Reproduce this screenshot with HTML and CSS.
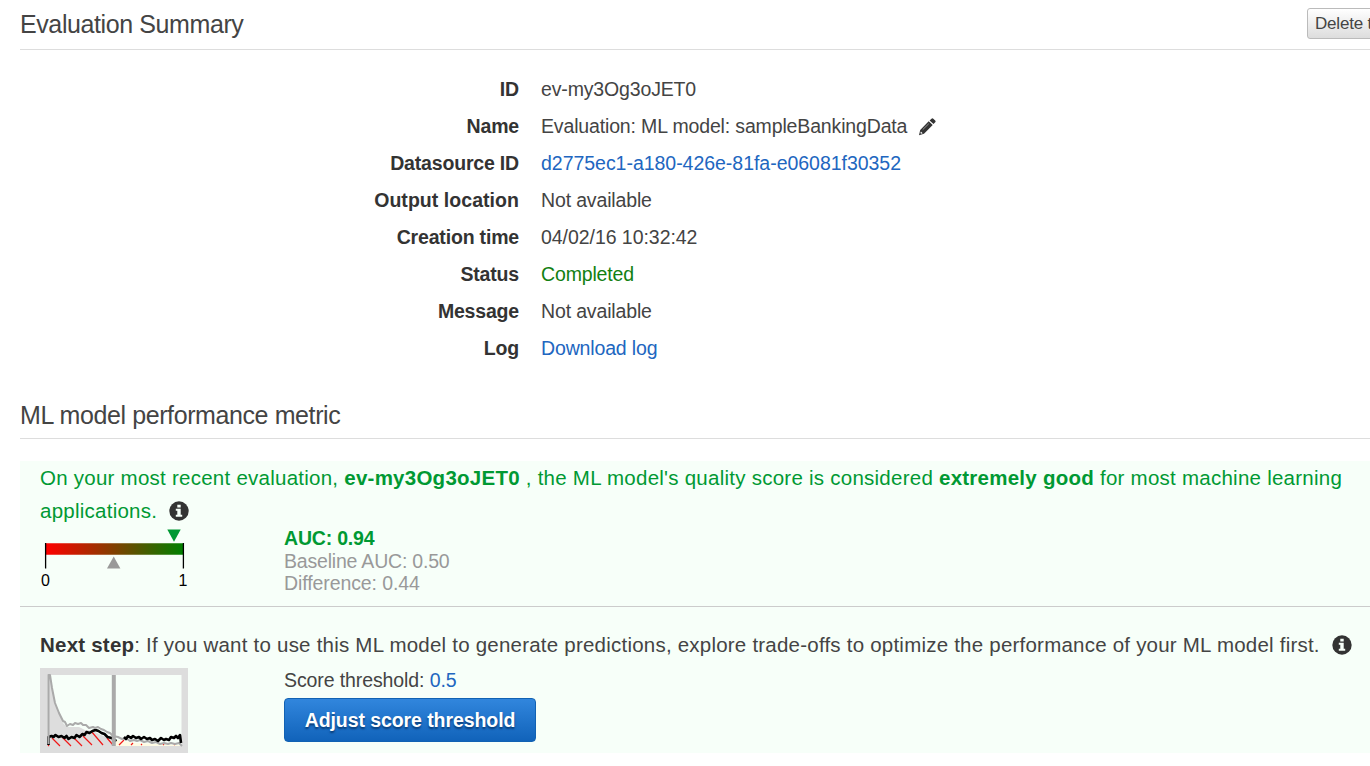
FILE: index.html
```html
<!DOCTYPE html>
<html lang="en">
<head>
<meta charset="utf-8">
<title>Evaluation Summary</title>
<link rel="stylesheet" href="styles.css">
</head>
<body>
<main class="page">
  <header class="section-head summary-head">
    <h1 class="title">Evaluation Summary</h1>
    <button class="delete-btn">Delete this evaluation</button>
  </header>
  <dl class="details">
    <dt>ID</dt><dd>ev-my3Og3oJET0</dd>
    <dt>Name</dt><dd>Evaluation: ML model: sampleBankingData
      <svg class="pencil" width="18" height="18" viewBox="0 0 18 18"><path fill="#333" d="M11.6 2.5 13.5.7q.9-.8 1.8 0l1.9 1.8q.8.9 0 1.8l-1.7 1.8zM10.7 3.3l4 3.7L6 15.7 1 17.2l1.2-5.3z"/><path fill="none" stroke="#aaa" stroke-width=".8" d="m4.7 11.7 6.1-6"/><path fill="#fff" d="m2.9 13.5 1.8 1.8-1.6.5-.7-.7z"/></svg></dd>
    <dt>Datasource ID</dt><dd><a class="link source">d2775ec1-a180-426e-81fa-e06081f30352</a></dd>
    <dt class="wide">Output location</dt><dd>Not available</dd>
    <dt>Creation time</dt><dd class="time">04/02/16 10:32:42</dd>
    <dt>Status</dt><dd class="done">Completed</dd>
    <dt>Message</dt><dd>Not available</dd>
    <dt>Log</dt><dd><a class="link">Download log</a></dd>
  </dl>
  <header class="section-head metric-head">
    <h2 class="title">ML model performance metric</h2>
  </header>
  <section class="panel">
    <div class="result">
      <p class="verdict">On your most recent evaluation, <b>ev-my3Og3oJET0</b> , the ML model's quality score is considered <b>extremely good</b> for most machine learning<br>applications.
        <svg class="info" width="20" height="20" viewBox="0 0 20 20"><circle cx="10" cy="10" r="9.7" fill="#333"/><path fill="#f7fff9" d="M8.3 3.7h3.4v2.7H8.3zM6.8 7.8h4.9v6h1.5v2H6.8v-2h1.5v-4H6.8z"/></svg></p>
      <div class="row">
        <svg class="gauge" width="160" height="64" viewBox="40 527 160 64">
          <defs><linearGradient id="score"><stop offset="0" stop-color="#f00"/><stop offset="1" stop-color="#008000"/></linearGradient></defs>
          <path fill="#093" d="M167.3 529.6h13.4L174 541.7z"/>
          <path fill="url(#score)" d="M46 543.3h137v11.5H46z"/>
          <path stroke="#000" stroke-width="1.3" d="M45.6 543v25.5M183.4 543v25.5"/>
          <path fill="#999" d="M107 568.6h13.4l-6.7-12.2z"/>
          <text x="45.5" y="585.6">0</text><text x="183" y="585.6">1</text>
        </svg>
        <div class="scores"><b>AUC: 0.94</b><span>Baseline AUC: 0.50</span><span class="diff">Difference: 0.44</span></div>
      </div>
    </div>
    <div class="next">
      <p class="advice"><b>Next step</b>: If you want to use this ML model to generate predictions, explore trade-offs to optimize the performance of your ML model first.
        <svg class="info" width="20" height="20" viewBox="0 0 20 20"><circle cx="10" cy="10" r="9.7" fill="#333"/><path fill="#f7fff9" d="M8.3 3.7h3.4v2.7H8.3zM6.8 7.8h4.9v6h1.5v2H6.8v-2h1.5v-4H6.8z"/></svg></p>
      <div class="row">
        <svg class="chart" width="148" height="85" viewBox="0 0 148 85">
          <path fill="#ddd" d="M0 0h148v85H0z"/>
          <path fill="#f7fff9" d="M7.5 7h134v71h-134z"/>
          <path fill="#ddd" d="M7.5 7H10l2 13 3 15 4 10 4 10 4 4h12l6 3 8 1 8 4 12 5v6H7.5z"/>
          <path fill="#fffbe3" d="M76 72l20 3 20 1 24 1v1H76z"/>
          <path stroke="#f01818" stroke-width="1.2" fill="none" d="M8 77l1 1M12 70l8 8M22 69l9 9M34 70l8 8M43 68l9 9M51 63l12 14M67 70l6 7M79 77l5-5M91 77l2-2M101 77l1-1M123 77l1-1M134 77l1-1"/>
          <path stroke="#000" stroke-width="2.6" fill="none" stroke-linejoin="round" d="M8.5 77v-8l3-1 2 1 2-2 3 2 3-1 3 2 2-2 2 3 3-2 3 1 2-3 3 2 3-3 2 1 2-3 3 1 3-2 3-1 3 1 3 2 3 1 3 3 4 1 5 3"/>
          <path stroke="#aaa" stroke-width="2" fill="none" stroke-linejoin="round" d="M8.5 76V7H10l2 13 3 15 4 10 4 8 2 1 2 4 3-2 3 1 2-2 3 1 3-1 2 2 3 0 3 3 4-1 2 1 3-1 3 2 3 1 3 2 3 1 3 3 5 1 4 2 4-1 4 3 4-1 3 1 3-1 4 2 4-1 4 2 4-1 4 2 4-1 4 1 3-1 4 1 4-1 3 3"/>
          <path stroke="#000" stroke-width="2.6" fill="none" stroke-linejoin="round" d="M84 69l2 2 2-3 3 2 2-2 3 2 3-1 2 2 3-2 3 2 3-1 2 2 3-1 3 2 3-3 3 2 2-1 3 1 2-3 3 1 2-2 2 2 2-3 1 8"/>
          <path stroke="#aaa" stroke-width="4" d="M73.8 7v71"/>
        </svg>
        <div class="threshold">
          <div class="score-line">Score threshold: <a class="link">0.5</a></div>
          <button class="primary">Adjust score threshold</button>
        </div>
      </div>
    </div>
  </section>
</main>
</body>
</html>
```
FILE: styles.css
```css
* { box-sizing: border-box; }
html, body { margin: 0; overflow: hidden; background: #fff; }
body { font-family: "Liberation Sans", Arial, sans-serif; font-size: 19.5px; color: #444; }
h1, h2, p, dl, dd { margin: 0; }
.page { height: 766px; padding-left: 20px; overflow: hidden; }
.section-head { display: flex; border-bottom: 1.5px solid #ddd; }
.summary-head { height: 50px; justify-content: space-between; }
.title { font-size: 25px; font-weight: 400; line-height: 30px; letter-spacing: -0.4px; padding-top: 9px; }
.delete-btn { flex: none; width: 180px; height: 31px; margin: 8px -117px 0 0; padding: 0 7px; text-align: left; white-space: nowrap; font: 17px "Liberation Sans", Arial, sans-serif; letter-spacing: -0.2px; color: #444; border: 1px solid #bbb; border-radius: 3px; background: linear-gradient(#fff, #ddd); }
.details { display: grid; grid-template-columns: 499px 1fr; column-gap: 22px; grid-auto-rows: 37px; padding-top: 21px; line-height: 36px; letter-spacing: -0.15px; white-space: nowrap; }
.details dt { text-align: right; font-weight: 700; color: #333; letter-spacing: -0.18px; }
.details .wide { letter-spacing: 0.05px; }
.details .time { letter-spacing: -0.05px; }
.link { color: #2166c0; }
.source { letter-spacing: -0.03px; }
.done { color: #128012; }
.pencil { margin-left: 5px; vertical-align: -3px; }
.metric-head { height: 72px; padding-top: 24px; }
.panel { height: 292px; margin-top: 22px; background: #f7fff9; }
.result { height: 146px; padding-left: 20px; border-bottom: 1.5px solid #ccc; }
.verdict { height: 66px; padding-top: 1px; font-size: 20.5px; line-height: 32.5px; color: #093; white-space: nowrap; letter-spacing: 0.25px; }
.info { margin-left: 6px; vertical-align: -3px; }
.row { display: flex; }
.gauge { flex: none; display: block; margin-right: 84px; }
.gauge text { font-size: 16px; text-anchor: middle; fill: #000; }
.scores { display: flex; flex-direction: column; line-height: 22.7px; color: #999; letter-spacing: -0.2px; }
.scores b { color: #093; }
.scores .diff { letter-spacing: -0.1px; }
.next { padding: 20px 0 0 20px; }
.advice { height: 41px; font-size: 20.5px; line-height: 36px; white-space: nowrap; letter-spacing: 0.22px; }
.advice b { color: #333; }
.chart { flex: none; display: block; margin-right: 96px; }
.score-line { height: 30px; line-height: 24px; letter-spacing: -0.1px; }
.primary { display: block; width: 252px; height: 44px; padding: 0; border: 1px solid #1262b3; border-radius: 4px; color: #fff; font: bold 19.5px "Liberation Sans", Arial, sans-serif; letter-spacing: -0.08px; text-shadow: 0 2px 2px #073b75; background: linear-gradient(#3186dd, #1163ba); }
```
